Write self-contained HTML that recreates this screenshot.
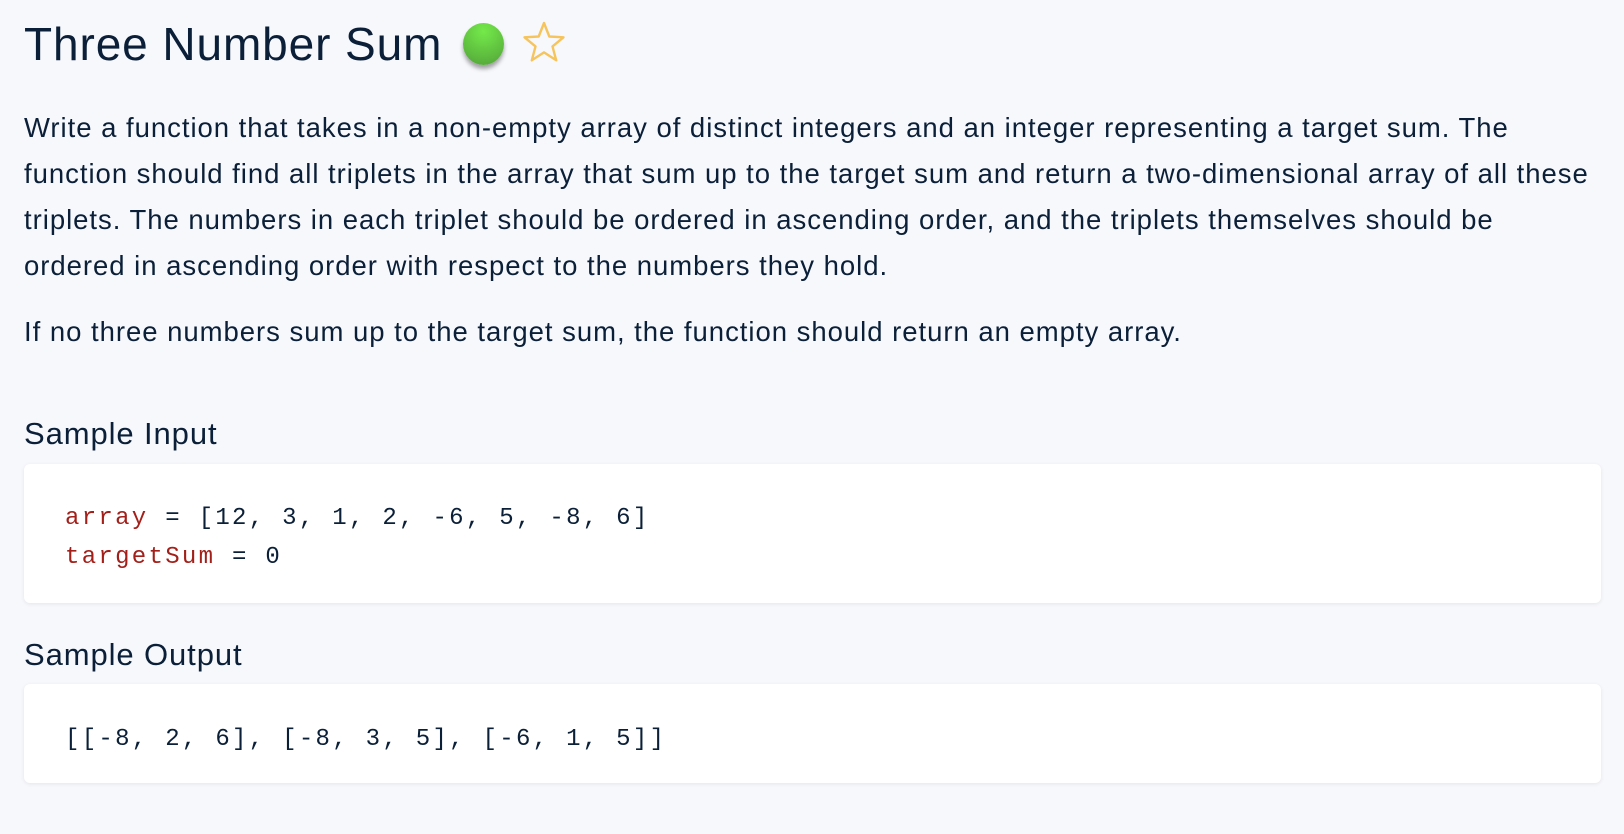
<!DOCTYPE html>
<html><head><meta charset="utf-8"><style>
html,body{margin:0;padding:0;background:#f7f8fc;width:1624px;height:834px;overflow:hidden}
body{font-family:"Liberation Sans",sans-serif;color:#0b2038;position:relative}
.a{position:absolute;white-space:nowrap}
h1{position:absolute;left:24px;top:14px;margin:0;font-weight:normal;font-size:46px;line-height:60px;letter-spacing:0.9px}
.p{position:absolute;left:24px;font-size:27.5px;line-height:46px;letter-spacing:0.97px;white-space:nowrap}
.h{position:absolute;left:24px;font-size:31px;line-height:40px;letter-spacing:0.9px}
.box{position:absolute;left:24px;width:1577px;background:#fff;border-radius:6px;box-shadow:0 1px 4px rgba(0,0,0,0.08)}
.code{position:absolute;left:65px;font-family:"Liberation Mono",monospace;font-size:24px;letter-spacing:2.3px;line-height:39px;color:#0b2038}
.r{color:#a3201a}
</style></head><body>
<h1>Three Number Sum</h1>
<div class="a" style="left:463px;top:23px;width:41px;height:42px;border-radius:50%;background:radial-gradient(circle at 50% 20%,#74ea4a,#55a93a 90%);box-shadow:0 4px 4px rgba(0,0,0,0.35)"></div>
<svg class="a" style="left:522px;top:21px" width="44" height="42" viewBox="0 0 44 42"><path d="M22 2 L27.3 15.5 L41.5 16.3 L30.5 25.4 L34.2 39.3 L22 31.4 L9.8 39.3 L13.5 25.4 L2.5 16.3 L16.7 15.5 Z" fill="none" stroke="#f6c45c" stroke-width="2.4" stroke-linejoin="round"/></svg>
<div class="p" style="top:105px">Write a function that takes in a non-empty array of distinct integers and an integer representing a target sum. The<br>function should find all triplets in the array that sum up to the target sum and return a two-dimensional array of all these<br>triplets. The numbers in each triplet should be ordered in ascending order, and the triplets themselves should be<br>ordered in ascending order with respect to the numbers they hold.</div>
<div class="p" style="top:309px">If no three numbers sum up to the target sum, the function should return an empty array.</div>
<div class="h" style="top:414px">Sample Input</div>
<div class="box" style="top:464px;height:139px"></div>
<div class="code" style="top:499px"><span class="r">array</span> = [12, 3, 1, 2, -6, 5, -8, 6]<br><span class="r">targetSum</span> = 0</div>
<div class="h" style="top:635px">Sample Output</div>
<div class="box" style="top:684px;height:99px"></div>
<div class="code" style="top:720px">[[-8, 2, 6], [-8, 3, 5], [-6, 1, 5]]</div>
</body></html>
